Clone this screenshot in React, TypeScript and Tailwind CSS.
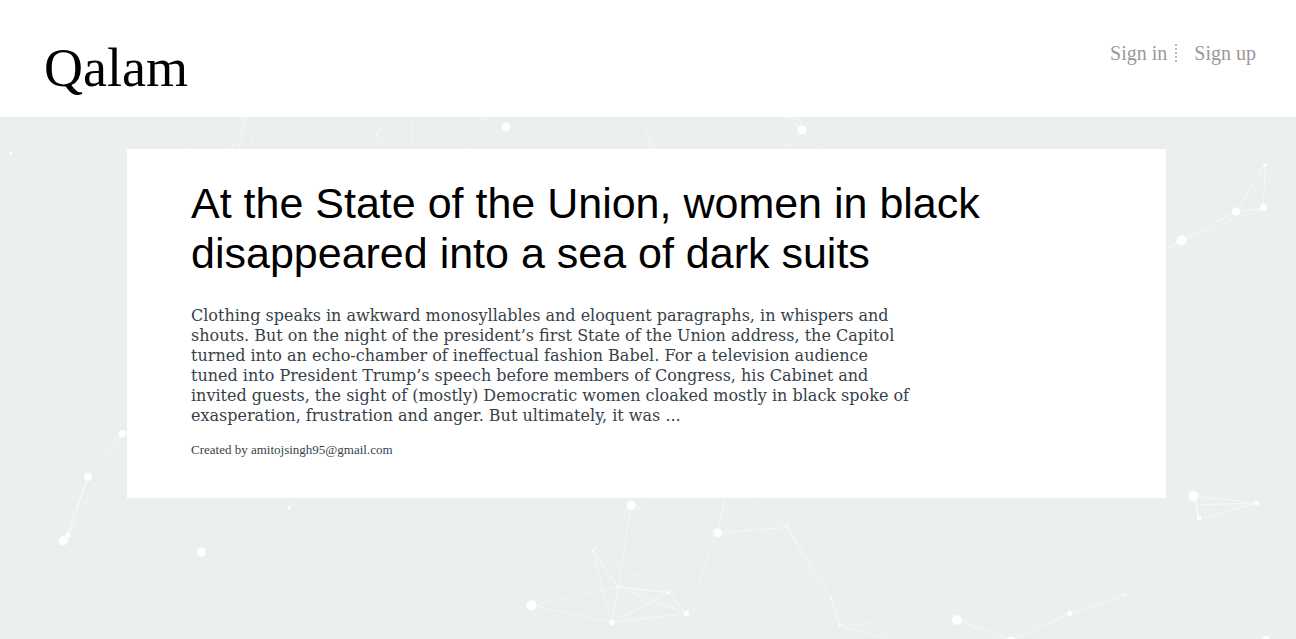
import React from 'react';

type Node = [x: number, y: number, r: number];
type Link = [x1: number, y1: number, x2: number, y2: number, opacity: number];

const nodes: Node[] = [
  [11, 153, 1.5],
  [506, 127, 4.5],
  [802, 130, 4.5],
  [376, 134, 1],
  [1265, 165, 2],
  [1236, 211.5, 4],
  [1263.5, 207.5, 3.5],
  [1181.5, 240.5, 5],
  [122.5, 433.5, 3.7],
  [88, 477, 4],
  [68, 535.5, 2.7],
  [63.3, 540.7, 4.6],
  [201.3, 552, 4.6],
  [289.3, 507.7, 1.6],
  [631.3, 505.3, 4.7],
  [717.7, 532.7, 4.2],
  [531.5, 605.3, 5],
  [592.5, 551, 1],
  [618, 587, 1.3],
  [668.7, 592.5, 1.5],
  [611.8, 622.5, 2.5],
  [686.5, 613.5, 2.7],
  [787.5, 527.5, 0.8],
  [831, 597.5, 1],
  [840, 625, 1.3],
  [957, 620, 4.9],
  [1011, 640.5, 4],
  [1069.7, 613.3, 2.8],
  [1125, 594.7, 1],
  [1193.5, 496, 5],
  [1256.7, 503, 2.3],
  [1199.3, 518, 2.3],
  [1266, 639.5, 3.5],
];

const links: Link[] = [
  [11, 153, 44, 117, 0.45],
  [58, 115, 127, 151, 0.2],
  [154, 117, 152, 149, 0.15],
  [245, 116, 185, 149, 0.25],
  [248, 115, 231, 149, 0.4],
  [248, 115, 238, 149, 0.4],
  [249, 115, 253, 149, 0.3],
  [376, 134, 391, 117, 0.4],
  [376, 134, 388, 149, 0.4],
  [376, 134, 365, 149, 0.15],
  [376, 140, 388, 140, 0.2],
  [412, 117, 412, 149, 0.25],
  [506, 127, 480, 117, 0.3],
  [506, 127, 467, 149, 0.25],
  [635, 117, 640, 149, 0.2],
  [640, 117, 653, 149, 0.45],
  [652, 117, 651, 149, 0.2],
  [674, 117, 653, 149, 0.35],
  [688, 117, 654, 149, 0.25],
  [746, 117, 758, 149, 0.25],
  [761, 117, 766, 149, 0.3],
  [775, 117, 773, 149, 0.2],
  [802, 130, 783, 115, 0.4],
  [802, 130, 789, 115, 0.4],
  [802, 130, 799, 117, 0.35],
  [802, 130, 788, 149, 0.5],
  [802, 130, 819, 149, 0.5],
  [1265, 165, 1236, 211.5, 0.5],
  [1265, 165, 1263.5, 207.5, 0.5],
  [1265, 165, 1181, 240, 0.15],
  [1236, 211.5, 1263.5, 208.5, 0.7],
  [1236, 211.5, 1181.5, 240.5, 0.6],
  [1263.5, 208, 1181.5, 240.5, 0.35],
  [1181.5, 240.5, 1166, 248.5, 0.7],
  [1181.5, 240.5, 1166, 262, 0.15],
  [122.5, 433.5, 88, 477, 0.4],
  [122.5, 433.5, 68, 535.5, 0.3],
  [88, 477, 68, 535.5, 0.6],
  [88, 477, 64, 540, 0.4],
  [201.3, 552, 289, 508, 0.2],
  [289, 508, 300, 498, 0.5],
  [289, 508, 292, 498, 0.2],
  [631, 505, 660, 498, 0.25],
  [631, 505, 717.7, 532.7, 0.35],
  [631, 505, 592.5, 551, 0.45],
  [631, 505, 618, 587, 0.45],
  [631, 505, 668.7, 592.5, 0.25],
  [717.7, 532.7, 725, 498, 0.5],
  [717.7, 532.7, 787.5, 527.5, 0.5],
  [717.7, 532.7, 618, 587, 0.25],
  [717.7, 532.7, 620, 550, 0.1],
  [717.7, 532.7, 668.7, 592.5, 0.35],
  [717.7, 532.7, 686.5, 613.5, 0.35],
  [787.5, 527.5, 747, 498, 0.4],
  [787.5, 527.5, 792, 498, 0.3],
  [787.5, 527.5, 831, 597.5, 0.45],
  [787.5, 527.5, 840, 625, 0.25],
  [531.5, 605.3, 592.5, 551, 0.4],
  [531.5, 605.3, 618, 587, 0.4],
  [531.5, 605.3, 611.8, 622.5, 0.45],
  [592.5, 551, 618, 587, 0.65],
  [592.5, 551, 611.8, 622.5, 0.45],
  [592.5, 551, 668.7, 592.5, 0.4],
  [618, 587, 611.8, 622.5, 0.65],
  [618, 587, 668.7, 592.5, 0.75],
  [618, 587, 686.5, 613.5, 0.5],
  [668.7, 592.5, 611.8, 622.5, 0.5],
  [668.7, 592.5, 686.5, 613.5, 0.65],
  [611.8, 622.5, 686.5, 613.5, 0.5],
  [831, 597.5, 840, 625, 0.6],
  [831, 597.5, 900, 642, 0.35],
  [831, 597.5, 957, 620, 0.12],
  [840, 625, 957, 620, 0.25],
  [840, 625, 895, 642, 0.45],
  [957, 620, 1011, 640.5, 0.6],
  [957, 620, 1069.7, 613.3, 0.3],
  [1011, 640.5, 1069.7, 613.3, 0.55],
  [1069.7, 613.3, 1125, 594.7, 0.5],
  [1125, 594.7, 1193.5, 512, 0.2],
  [1148, 572, 1199, 518, 0.15],
  [1193.5, 496, 1256.7, 503, 0.5],
  [1196, 505, 1256.7, 503, 0.5],
  [1199.3, 519, 1256.7, 503, 0.6],
  [1193.5, 496, 1199.3, 518, 0.7],
  [1196, 500, 1198, 518, 0.5],
];

function Constellation() {
  return (
    <svg
      aria-hidden="true"
      className="absolute inset-0 h-full w-full"
      viewBox="0 117 1296 522"
      preserveAspectRatio="xMidYMin slice"
    >
      <g stroke="#fff" strokeWidth="1">
        {links.map(([x1, y1, x2, y2, opacity], i) => (
          <line key={i} x1={x1} y1={y1} x2={x2} y2={y2} strokeOpacity={opacity} />
        ))}
      </g>
      <g fill="#fff">
        {nodes.map(([cx, cy, r], i) => (
          <circle key={i} cx={cx} cy={cy} r={r} />
        ))}
      </g>
    </svg>
  );
}

function Header() {
  return (
    <header className="flex h-[117px] items-start justify-between bg-white pr-10 pl-11">
      <a
        href="#home"
        className="pt-9 font-['Liberation_Serif',serif] text-[54px] leading-[64px] text-black"
      >
        Qalam
      </a>
      <nav className="flex items-center pt-11 font-['Liberation_Serif',serif] text-xl leading-[18px] text-[#999]">
        <a href="#sign-in" className="border-r-2 border-dotted border-[#bbb] pr-2">
          Sign in
        </a>
        <a href="#sign-up" className="pl-[17px]">
          Sign up
        </a>
      </nav>
    </header>
  );
}

function Article() {
  return (
    <article className="relative bg-white px-16 pt-[29px] pb-10">
      <h1 className="font-['Liberation_Sans',sans-serif] text-[43px] leading-[50px] text-black">
        At the State of the Union, women in black disappeared into a sea of dark suits
      </h1>
      <p className="mt-7 max-w-[728px] font-['DejaVu_Serif',serif] text-base leading-5 text-[#373f49]">
        Clothing speaks in awkward monosyllables and eloquent paragraphs, in whispers and shouts.
        But on the night of the president’s first State of the Union address, the Capitol turned
        into an echo-chamber of ineffectual fashion Babel. For a television audience tuned into
        President Trump’s speech before members of Congress, his Cabinet and invited guests, the
        sight of (mostly) Democratic women cloaked mostly in black spoke of exasperation,
        frustration and anger. But ultimately, it was ...
      </p>
      <p className="mt-4 font-['Liberation_Serif',serif] text-[13px] leading-4 text-[#373f49]">
        Created by amitojsingh95@gmail.com
      </p>
    </article>
  );
}

export default function App() {
  return (
    <div className="flex min-h-screen flex-col">
      <Header />
      <main className="relative flex-1 overflow-hidden bg-[#ebeff0] pt-8 pr-[130px] pb-8 pl-[127px]">
        <Constellation />
        <Article />
      </main>
    </div>
  );
}
